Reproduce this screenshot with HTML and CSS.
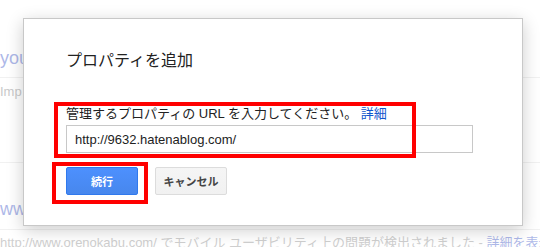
FILE: index.html
```html
<!DOCTYPE html>
<html>
<head>
    <meta charset='utf-8'>
    <title>プロパティを追加</title>
    <meta name='viewport' content='width=device-width, initial-scale=1'>
    <link rel="stylesheet" href="styles.css">
</head>
<body>
    <div class="page">
        <div class="row row-site">
            <span class="site-link">you</span>
        </div>
        <div class="row row-note">
            <span class="note">Imp</span>
        </div>
        <div class="row row-site2">
            <span class="site-link">www</span>
        </div>
        <div class="row row-msg">
            <span class="msg">http://www.orenokabu.com/ でモバイル ユーザビリティ上の問題が検出されました - <span class="msg-link">詳細を表示</span></span>
        </div>
    </div>

    <div class="dialog">
        <h1 class="dialog-title">プロパティを追加</h1>
        <p class="dialog-label">管理するプロパティの URL を入力してください。 <a href="#" class="more">詳細</a></p>
        <input type="text" class="url-input" value="http://9632.hatenablog.com/">
        <div class="buttons">
            <button class="btn btn-primary">続行</button>
            <button class="btn btn-cancel">キャンセル</button>
        </div>
        <!-- 赤枠は注釈 -->
        <div class="mark mark-url"></div>
        <div class="mark mark-btn"></div>
    </div>
</body>
</html>
```

FILE: styles.css
```css
body {
    margin: 0;
    width: 540px;
    height: 247px;
    overflow: hidden;
    background-color: #fff;
    font-family: Arial, "Liberation Sans", "Noto Sans CJK JP", sans-serif;
    position: relative;
}
.page {
    padding-top: 48px;
    opacity: 0.4;
}
.row {
    white-space: nowrap;
    overflow: hidden;
}
.row-site {
    height: 29px;
    border-bottom: 1px solid #ddd;
}
.row-note {
    padding-top: 4px;
    height: 80px;
    border-bottom: 1px solid #ddd;
}
.row-site2 {
    padding-top: 36px;
    height: 30px;
    border-bottom: 1px solid #ddd;
}
.row-msg {
    padding-top: 2px;
}
.site-link {
    font-size: 18px;
    color: #3550c8;
}
.note {
    font-size: 13px;
    color: #777;
}
.msg {
    font-size: 13px;
    color: #888;
}
.msg-link {
    color: #3550c8;
}
.dialog {
    position: absolute;
    left: 23px;
    top: 18px;
    width: 414px;
    padding: 32px 42px 30px 42px;
    background-color: #fff;
    border: 1px solid #c8c8c8;
    box-shadow: 0 4px 16px rgba(0, 0, 0, 0.2);
}
.dialog-title {
    margin: 0;
    font-size: 16px;
    line-height: 20px;
    font-weight: normal;
    color: #222;
}
.dialog-label {
    margin: 35px 0 0 0;
    font-size: 13px;
    line-height: 16px;
    color: #222;
    white-space: nowrap;
}
.more {
    color: #1155cc;
    text-decoration: none;
}
.url-input {
    display: block;
    box-sizing: border-box;
    margin-top: 3px;
    width: 407px;
    height: 28px;
    padding: 0 8px;
    border: 1px solid #c8c8c8;
    font-family: Arial, "Liberation Sans", sans-serif;
    font-size: 13px;
    color: #222;
    outline: none;
}
.buttons {
    display: flex;
    gap: 17px;
    margin-top: 14px;
}
.btn {
    box-sizing: border-box;
    width: 72px;
    height: 28px;
    border-radius: 2px;
    font-family: Arial, "Liberation Sans", "Noto Sans CJK JP", sans-serif;
    font-size: 11px;
    font-weight: bold;
    cursor: pointer;
}
.btn-primary {
    color: #fff;
    background: linear-gradient(#4d90fe, #4787ed);
    border: 1px solid #3079ed;
}
.btn-cancel {
    color: #444;
    background: linear-gradient(#f5f5f5, #f1f1f1);
    border: 1px solid #dcdcdc;
}
.mark {
    position: absolute;
    box-sizing: border-box;
    border: 4px solid #ff0000;
}
.mark-url {
    left: 30px;
    top: 83px;
    width: 362px;
    height: 56px;
}
.mark-btn {
    left: 28px;
    top: 143px;
    width: 96px;
    height: 42px;
}
```
